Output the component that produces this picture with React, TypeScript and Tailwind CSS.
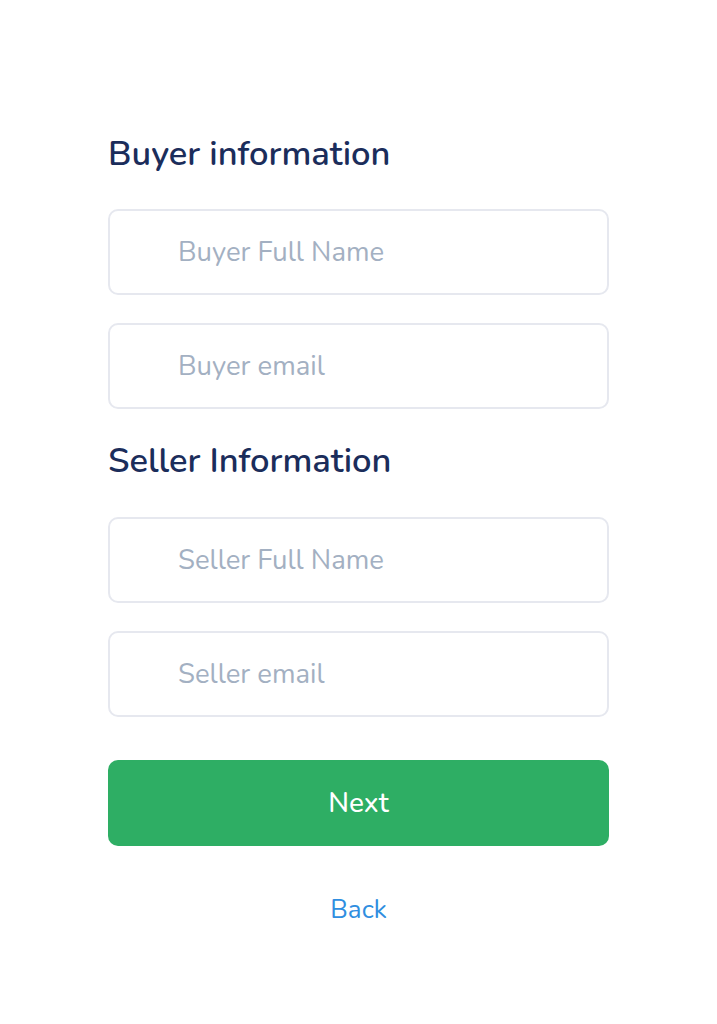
import React from "react";

const font = { fontFamily: '"Nunito", "Lato", "Noto Sans", sans-serif' };

function Field({ placeholder }: { placeholder: string }) {
  return (
    <input
      placeholder={placeholder}
      className="h-[86px] w-full rounded-[10px] border-2 border-[#e6e8ef] bg-white pl-[68px] text-[27.5px] text-[#1c2d5a] placeholder:text-[#a3b0c2] outline-none"
      style={font}
    />
  );
}

export default function App() {
  return (
    <div className="min-h-[1024px] w-full bg-white" style={font}>
      <div className="mx-auto flex w-[501px] flex-col pt-[130px]">
        <h2 className="text-[34.5px] leading-[48px] font-semibold text-[#1b2d5b]">Buyer information</h2>
        <div className="mt-[31px] flex flex-col gap-[28px]">
          <Field placeholder="Buyer Full Name" />
          <Field placeholder="Buyer email" />
        </div>
        <h2 className="mt-[28px] text-[34.5px] leading-[48px] font-semibold text-[#1b2d5b]">Seller Information</h2>
        <div className="mt-[32px] flex flex-col gap-[28px]">
          <Field placeholder="Seller Full Name" />
          <Field placeholder="Seller email" />
        </div>
        <button className="mt-[43px] h-[86px] w-full rounded-[10px] bg-[#2eae64] text-[28px] font-medium text-white">
          Next
        </button>
        <button className="mt-[44px] self-center text-[26px] text-[#2f8ee0]">Back</button>
      </div>
    </div>
  );
}
